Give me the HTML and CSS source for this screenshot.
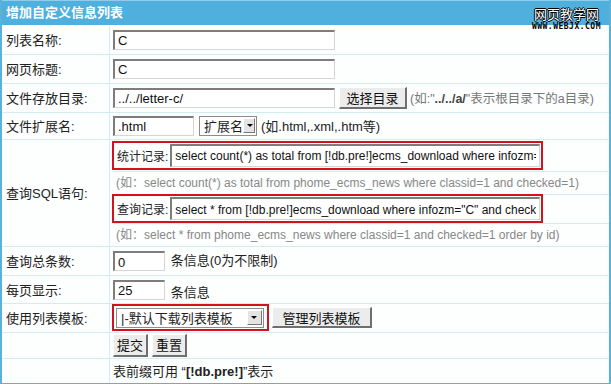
FILE: index.html
```html
<!DOCTYPE html>
<html lang="zh-CN">
<head>
    <meta charset="UTF-8">
    <meta name="viewport" content="width=device-width, initial-scale=1.0">
    <title>增加自定义信息列表</title>
    <link rel="stylesheet" href="styles.css">
</head>
<body>
    <div class="panel">
        <div class="head">
            增加自定义信息列表
            <div class="mark">
                <span class="mark-cn">网页教学网</span>
                <span class="mark-en">WWW.WEBJX.COM</span>
            </div>
        </div>
        <table class="form">
            <tr class="h28">
                <th>列表名称:</th>
                <td><input class="txt w222" type="text" value="C"></td>
            </tr>
            <tr class="h29">
                <th>网页标题:</th>
                <td><input class="txt w222" type="text" value="C"></td>
            </tr>
            <tr class="h29">
                <th>文件存放目录:</th>
                <td>
                    <div class="line">
                        <input class="txt w222" type="text" value="../../letter-c/">
                        <button class="btn btn-dir" type="button">选择目录</button>
                        <span class="note">(如:"<b>../../a/</b>"表示根目录下的a目录)</span>
                    </div>
                </td>
            </tr>
            <tr class="h27">
                <th>文件扩展名:</th>
                <td>
                    <div class="line">
                        <input class="txt w80" type="text" value=".html">
                        <span class="sel sel-ext">扩展名<i class="arrow"></i></span>
                        <span class="dark">(如.html,.xml,.htm等)</span>
                    </div>
                </td>
            </tr>
            <tr>
                <th>查询SQL语句:</th>
                <td class="sql">
                    <div class="sql-line first">
                        <div class="redbox">
                            <span class="sql-label">统计记录:</span>
                            <input class="txt w369" type="text" value="select count(*) as total from [!db.pre!]ecms_download where infozm=&quot;C&quot;">
                        </div>
                    </div>
                    <div class="sql-hint">(如：select count(*) as total from phome_ecms_news where classid=1 and checked=1)</div>
                    <div class="sql-line">
                        <div class="redbox">
                            <span class="sql-label">查询记录:</span>
                            <input class="txt w369" type="text" value="select * from [!db.pre!]ecms_download where infozm=&quot;C&quot; and checked=1">
                        </div>
                    </div>
                    <div class="sql-hint">(如：select * from phome_ecms_news where classid=1 and checked=1 order by id)</div>
                </td>
            </tr>
            <tr class="h29">
                <th>查询总条数:</th>
                <td><input class="txt w51" type="text" value="0"> <span class="dark unit">条信息(0为不限制)</span></td>
            </tr>
            <tr class="h28">
                <th>每页显示:</th>
                <td><input class="txt w51" type="text" value="25"> <span class="dark unit low">条信息</span></td>
            </tr>
            <tr class="h29">
                <th>使用列表模板:</th>
                <td class="tpl">
                    <div class="line">
                        <div class="redbox redbox-tpl">
                            <span class="sel sel-tpl">|-默认下载列表模板<i class="arrow"></i></span>
                        </div>
                        <button class="btn btn-tpl" type="button">管理列表模板</button>
                    </div>
                </td>
            </tr>
            <tr class="h26">
                <th></th>
                <td>
                    <div class="line">
                        <button class="btn btn-sm" type="submit">提交</button>
                        <button class="btn btn-sm" type="reset">重置</button>
                    </div>
                </td>
            </tr>
            <tr class="h25">
                <th></th>
                <td class="dark">表前缀可用 “<b>[!db.pre!]</b>”表示</td>
            </tr>
        </table>
    </div>
</body>
</html>
```

FILE: styles.css
```css
body {
    margin: 0;
    font-family: "Liberation Sans", "Noto Sans CJK SC", sans-serif;
    font-size: 13px;
    color: #222;
}
.panel {
    width: 607px;
    border: 2px solid #58b2dc;
    border-top: 0;
    background: #fdfefe;
}
.head {
    position: relative;
    height: 24px;
    line-height: 24px;
    padding-left: 4px;
    background: #4fafdd;
    border-top: 1px solid #8fcdea;
    color: #fff;
    font-weight: bold;
    font-size: 13px;
    border-bottom: 1px solid #fff;
}
.mark {
    position: absolute;
    right: 8px;
    top: 7px;
    display: flex;
    flex-direction: column;
    align-items: center;
    line-height: 1;
}
.mark-cn {
    font-size: 13px;
    font-weight: normal;
    color: #fff;
    text-shadow: 1px 0 #000, -1px 0 #000, 0 1px #000, 0 -1px #000;
}
.mark-en {
    margin-top: 2px;
    font-family: "DejaVu Sans Mono", monospace;
    font-size: 8px;
    font-weight: bold;
    color: #000;
    letter-spacing: 0.5px;
}
.form {
    width: 100%;
    border-collapse: collapse;
}
.form th,
.form td {
    border-top: 1px solid #d3ecf4;
    padding: 0 0 0 3px;
    vertical-align: middle;
    white-space: nowrap;
}
.form tr:first-child th,
.form tr:first-child td {
    border-top: 0;
}
.form th {
    width: 103px;
    text-align: left;
    font-weight: normal;
    padding-left: 4px;
    border-right: 1px solid #d3ecf4;
}
.h25 { height: 25px; }
.h26 { height: 26px; }
.h27 { height: 27px; }
.h28 { height: 28px; }
.h29 { height: 29px; }
.line {
    display: flex;
    align-items: center;
    gap: 4px;
}
.txt {
    box-sizing: border-box;
    height: 20px;
    margin: 0;
    padding: 1px 3px 0;
    border: 1px solid #d5d5d5;
    border-top: 2px solid #7d7d7d;
    border-left: 2px solid #7d7d7d;
    background: #fff;
    font-family: "Liberation Sans", "Noto Sans CJK SC", sans-serif;
    font-size: 13px;
    color: #111;
    vertical-align: middle;
}
.w222 { width: 222px; }
.w80 { width: 81px; }
.w51 { width: 52px; }
.w369 {
    width: 370px;
    height: 23px;
    font-size: 12px;
}
.btn {
    box-sizing: border-box;
    height: 21px;
    margin: 0;
    padding: 0 6px;
    border: 1px solid #fff;
    border-right: 2px solid #6f6f6f;
    border-bottom: 2px solid #6f6f6f;
    background: #ececec;
    font-family: "Liberation Sans", "Noto Sans CJK SC", sans-serif;
    font-size: 13px;
    color: #111;
}
.btn-dir {
    width: 68px;
    height: 22px;
    margin-right: -1px;
}
.btn-tpl {
    width: 100px;
}
.btn-sm {
    width: 35px;
    height: 23px;
    padding: 0;
}
.note {
    font-size: 12.5px;
    color: #777;
}
.note b {
    color: #444;
}
.dark {
    color: #222;
}
.unit {
    margin-left: 2px;
}
.low {
    position: relative;
    top: 4px;
}
.sel {
    box-sizing: border-box;
    display: inline-flex;
    align-items: center;
    justify-content: space-between;
    height: 20px;
    padding: 0 1px 0 4px;
    border: 1px solid #8c8c8c;
    background: #fff;
}
.sel-ext {
    width: 58px;
    margin-left: 1px;
}
.sel-tpl {
    width: 148px;
}
.arrow {
    position: relative;
    width: 15px;
    height: 15px;
    box-sizing: border-box;
    border: 1px solid #fff;
    border-right-color: #777;
    border-bottom-color: #777;
    background: #e4e4e4;
}
.arrow::after {
    content: "";
    position: absolute;
    left: 3px;
    top: 5px;
    border-left: 3px solid transparent;
    border-right: 3px solid transparent;
    border-top: 3px solid #000;
}
.redbox {
    box-sizing: border-box;
    display: flex;
    align-items: center;
    border: 2px solid #d3121e;
}
.sql {
    padding-left: 0;
}
.sql-line {
    height: 28px;
    border-top: 1px solid #d3ecf4;
    display: flex;
    align-items: center;
}
.sql-line.first {
    height: 31px;
    border-top: 0;
}
.sql-line .redbox {
    width: 431px;
    height: 29px;
    padding-left: 3px;
    margin-left: -1px;
}
.sql-label {
    font-size: 12px;
    margin-right: 2px;
}
.sql-hint {
    height: 22px;
    line-height: 22px;
    padding-left: 3px;
    color: #888;
    border-top: 1px solid #d3ecf4;
    font-size: 12px;
}
.tpl {
    padding-left: 0;
}
.tpl .line {
    gap: 3px;
}
.redbox-tpl {
    width: 157px;
    height: 27px;
    padding-left: 2px;
    margin-left: -1px;
}
```
